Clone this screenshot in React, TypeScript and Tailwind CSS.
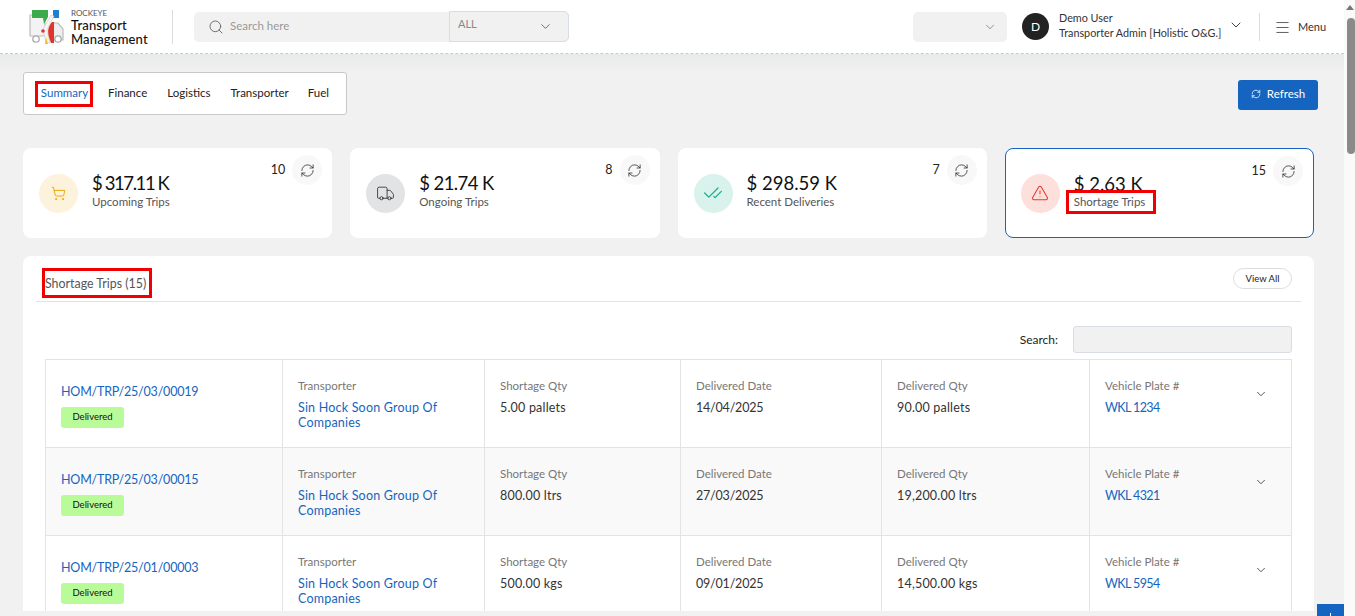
import { ChevronDown, Menu, RefreshCw, Search, ShoppingCart, Truck, CheckCheck, TriangleAlert } from "lucide-react";

const rows = [
  { id: "HOM/TRP/25/03/00019", qty: "5.00 pallets", date: "14/04/2025", del: "90.00 pallets", plate: "WKL 1234", alt: false },
  { id: "HOM/TRP/25/03/00015", qty: "800.00 ltrs", date: "27/03/2025", del: "19,200.00 ltrs", plate: "WKL 4321", alt: true },
  { id: "HOM/TRP/25/01/00003", qty: "500.00 kgs", date: "09/01/2025", del: "14,500.00 kgs", plate: "WKL 5954", alt: false },
];

function Logo() {
  return (
    <svg width="37" height="34" viewBox="0 0 37 34" className="shrink-0">
      <path d="M2 5h15v21H2z" fill="#f3f3f3" stroke="#b9bcbc" strokeWidth="1.2" />
      <path d="M25 13h5l5 6v11H25z" fill="#eeeeee" stroke="#b9bcbc" strokeWidth="1.2" />
      <circle cx="8" cy="29" r="3.2" fill="#fff" stroke="#a9acac" strokeWidth="1.3" />
      <circle cx="30" cy="29" r="3.2" fill="#fff" stroke="#a9acac" strokeWidth="1.3" />
      <path d="M4 0h16v7l-4 7-1-6H4z" fill="#3cab4a" />
      <path d="M25 0h6v8h-6z" fill="#1c7fd0" />
      <path d="M23 5 15 19l3 14h4l-3-13 7-14z" fill="#f4f4f4" stroke="#c9c9c9" strokeWidth=".6" />
      <path d="M24 12c-5 6-5 11-1 21h3V12z" fill="#e0352b" />
      <circle cx="15" cy="21" r="1.8" fill="#d13a34" />
      <path d="M18 27l2 7h-3z" fill="#f2bd2c" />
    </svg>
  );
}

function Stat({ value, label, count, circle, icon, active, track }: { value: string; label: string; count: string; circle: string; icon: React.ReactNode; active?: boolean; track: string }) {
  return (
    <div className={`h-[90px] rounded-[8px] bg-white flex items-center pl-4 pr-[10px] ${active ? "border border-[#1565c0] pl-[15px]" : ""}`}>
      <div className={`w-[39px] h-[39px] rounded-full flex items-center justify-center shrink-0 ${circle}`}>{icon}</div>
      <div className="ml-[14px] -mt-[6px]">
        <div className={`text-[18.5px] leading-[24px] text-[#111] ${track}`}>{value}</div>
        {active ? (
          <div className="relative z-10 -ml-[8px] -mt-[6px] -mb-[5px] w-[90px] h-[24px] bg-white border-[3px] border-[#f00000] pl-[5px] text-[11.5px] leading-[18px] text-[#555]">{label}</div>
        ) : (
          <div className="text-[11.5px] leading-[14px] text-[#555]">{label}</div>
        )}
      </div>
      <div className="ml-auto self-start mt-[7px] flex items-center gap-[7px]">
        <span className="text-[12.5px] text-[#222]">{count}</span>
        <span className="w-[30px] h-[30px] rounded-full bg-[#f8f8f8] flex items-center justify-center">
          <RefreshCw size={15} strokeWidth={1.2} className="text-[#222]" />
        </span>
      </div>
    </div>
  );
}

function Cell({ label, children }: { label: string; children: React.ReactNode }) {
  return (
    <div className="border-r border-[#e3e3e3] pl-[15px] pt-[19px]">
      <div className="text-[11.5px] leading-[14px] text-[#777]">{label}</div>
      <div className="mt-[7px] text-[12.5px] leading-[15px] text-[#333]">{children}</div>
    </div>
  );
}

export default function App() {
  return (
    <div className="relative h-screen w-full overflow-hidden flex bg-[#fafafa] font-['Lato','Inter',sans-serif]">
      <div className="flex-1 min-w-0 flex flex-col">
        <header className="h-[54px] shrink-0 bg-white border-b border-dashed border-[#c9c9c9] flex items-center pl-[28px]">
          <Logo />
          <div className="ml-[6px] w-[90px] mt-[3px]">
            <div className="text-[8px] leading-[10px] text-[#555] mt-[-2px]">ROCKEYE</div>
            <div className="text-[13px] leading-[14.5px] tracking-[0.15px] font-medium text-[#111]">Transport<br />Management</div>
          </div>
          <div className="ml-[11px] w-px h-[34px] bg-[#dcdcdc]" />
          <div className="ml-[21px] w-[255px] h-[30px] bg-[#f1f1f1] rounded-l-[5px] flex items-center pl-[14px]">
            <Search size={16} strokeWidth={1.4} className="text-[#666]" />
            <span className="ml-[6px] -mt-[1px] text-[11.5px] text-[#999]">Search here</span>
          </div>
          <div className="w-[120px] h-[31px] bg-[#f1f1f1] border border-[#d8dce3] rounded-r-[5px] flex items-center justify-between pl-[8px] pr-[15px]">
            <span className="text-[11px] text-[#888] -mt-[4px]">ALL</span>
            <ChevronDown size={15} strokeWidth={1.2} className="text-[#444]" />
          </div>
          <div className="ml-[344px] w-[94px] h-[30px] bg-[#f1f1f1] rounded-[5px] flex items-center justify-end pr-[10px]">
            <ChevronDown size={14} strokeWidth={1.2} className="text-[#666]" />
          </div>
          <div className="ml-[15px] w-[27px] h-[27px] rounded-full bg-[#222] text-white flex items-center justify-center text-[12px]">D</div>
          <div className="ml-[10px] w-[170px] -mt-[4px] text-[10.8px] leading-[15px] text-[#333] whitespace-nowrap">
            Demo User<br />Transporter Admin [Holistic O&amp;G.]
          </div>
          <ChevronDown size={16} strokeWidth={1.3} className="-ml-[1px] -mt-[4px] text-[#222]" />
          <div className="ml-[15px] w-px h-[28px] bg-[#dcdcdc]" />
          <Menu size={17} strokeWidth={1.1} className="ml-[14px] mt-[2px] text-[#333]" />
          <span className="ml-[7px] mt-[2px] text-[11px] text-[#333]">Menu</span>
        </header>

        <main className="flex-1 min-h-0 flex flex-col overflow-hidden bg-[#f1f1f1] bg-[linear-gradient(to_bottom,#e8e9e9,#f1f1f1_18px)] pl-[23px] pr-[30px] pt-[18px] pb-[5px]">
          <div className="flex items-start justify-between shrink-0">
            <nav className="w-[324px] h-[43px] bg-white border border-[#c8c8c8] rounded-[3px] flex items-center pl-[11px] text-[11.5px] text-[#222]">
              <span className="w-[58px] h-[26px] border-[3px] border-[#f00000] text-[#1565c0] flex items-center justify-center pb-[2px] pl-[1px]">Summary</span>
              <span className="ml-[15px] -mt-[1px]">Finance</span>
              <span className="ml-[20px] -mt-[1px]">Logistics</span>
              <span className="ml-[20px] -mt-[1px]">Transporter</span>
              <span className="ml-[19px] -mt-[1px]">Fuel</span>
            </nav>
            <button className="mt-[8px] -mr-[4px] w-[80px] h-[30px] bg-[#1565c0] rounded-[3px] text-white text-[11.5px] flex items-center justify-center gap-[6px] pb-[2px]">
              <RefreshCw size={10} strokeWidth={1.8} />Refresh
            </button>
          </div>

          <section className="mt-[33px] grid grid-cols-4 gap-[18px] shrink-0">
            <Stat track="tracking-[-1.4px]" value="$ 317.11 K" label="Upcoming Trips" count="10" circle="bg-[#fdf2dc]" icon={<ShoppingCart size={15} strokeWidth={1.6} className="text-[#eea90f]" />} />
            <Stat track="tracking-[-0.6px]" value="$ 21.74 K" label="Ongoing Trips" count="8" circle="bg-[#e2e3e5]" icon={<Truck size={19} strokeWidth={1.1} className="text-[#333]" />} />
            <Stat track="tracking-[0px]" value="$ 298.59 K" label="Recent Deliveries" count="7" circle="bg-[#d9f2ec]" icon={<CheckCheck size={20} strokeWidth={1.5} className="text-[#17ad8d]" />} />
            <Stat track="tracking-[0px]" active value="$ 2.63 K" label="Shortage Trips" count="15" circle="bg-[#fde0dc]" icon={<TriangleAlert size={18} strokeWidth={1.4} className="text-[#e8382c]" />} />
          </section>

          <section className="mt-[18px] flex-1 min-h-0 overflow-hidden bg-white rounded-t-[8px] px-[13px] pt-3">
            <div className="h-[34px] border-b border-[#e3e3e3] flex items-start justify-between">
              <div className="ml-[6px] w-[110px] h-[30px] border-[3px] border-[#f00000] text-[12.4px] leading-[26px] text-[#555] whitespace-nowrap">Shortage Trips (15)</div>
              <button className="mr-[9px] w-[59px] h-[21px] rounded-full border border-[#dcdcdc] text-[9.5px] pt-px text-[#222]">View All</button>
            </div>
            <div className="mt-[24px] mr-[9px] flex items-center justify-end">
              <span className="text-[12px] text-[#222]">Search:</span>
              <div className="ml-[15px] w-[219px] h-[27px] bg-[#f1f1f1] border border-[#d8dce3] rounded-[3px]" />
            </div>
            <div className="mt-[6px] ml-[9px] mr-[9px] border-t border-l border-[#e3e3e3]">
              {rows.map((r) => (
                <div key={r.id} className={`grid grid-cols-[237px_202px_196px_201px_208px_1fr] h-[88px] border-b border-[#e3e3e3] ${r.alt ? "bg-[#f9f9f9]" : ""}`}>
                  <div className="border-r border-[#e3e3e3] pl-[15px] pt-[24px]">
                    <div className="text-[12.5px] leading-[15px] tracking-[-0.2px] text-[#1565c0]">{r.id}</div>
                    <div className="mt-[8px] w-[63px] h-[21px] rounded-[3px] bg-[#b9fb99] flex items-center justify-center text-[9.5px] text-[#111]">Delivered</div>
                  </div>
                  <Cell label="Transporter"><span className="text-[#1565c0] tracking-[0.2px]">Sin Hock Soon Group Of<br />Companies</span></Cell>
                  <Cell label="Shortage Qty"><span className="tracking-[0.2px]">{r.qty}</span></Cell>
                  <Cell label="Delivered Date"><span className="tracking-[-0.2px]">{r.date}</span></Cell>
                  <Cell label="Delivered Qty"><span className="tracking-[0.2px]">{r.del}</span></Cell>
                  <div className="border-r border-[#e3e3e3] pl-[15px] pt-[19px] flex justify-between pr-[23px]">
                    <div>
                      <div className="text-[11.5px] leading-[14px] text-[#777]">Vehicle Plate #</div>
                      <div className="mt-[7px] text-[12.5px] leading-[15px] tracking-[-0.6px] text-[#1565c0]">{r.plate}</div>
                    </div>
                    <ChevronDown size={14} strokeWidth={1.3} className="mt-[8px] text-[#222]" />
                  </div>
                </div>
              ))}
            </div>
          </section>
        </main>
      </div>

      <div className="w-[11px] shrink-0 bg-[#fafafa] flex flex-col items-end">
        <div className="mt-[5px] mr-[1px] w-0 h-0 border-x-[4px] border-x-transparent border-b-[5px] border-b-[#777]" />
        <div className="mt-[8px] w-[8px] h-[136px] rounded-[4px] bg-[#8a8a8a]" />
      </div>

      <div className="absolute right-[11px] bottom-0 w-[27px] h-[12px] bg-[#1565c0] flex justify-center pt-[9px]">
        <span className="w-px h-[3px] bg-white" />
      </div>
    </div>
  );
}
